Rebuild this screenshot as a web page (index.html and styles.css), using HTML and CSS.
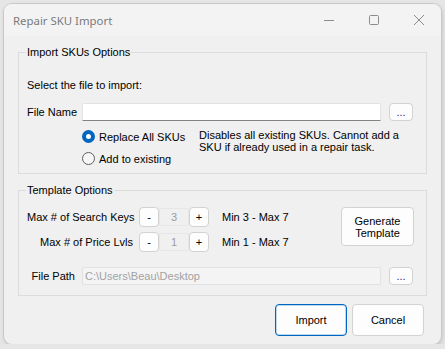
FILE: index.html
```html
<!DOCTYPE html>
<html lang="en">
<head>
  <meta charset="UTF-8">
  <meta name="viewport" content="width=device-width, initial-scale=1.0">
  <title>Repair SKU Import</title>
  <link rel="stylesheet" href="styles.css">
</head>
<body>
  <div class="window">
    <div class="titlebar">
      <span class="title">Repair SKU Import</span>
      <div class="controls">
        <span class="ctl">
          <svg width="12" height="12" viewBox="0 0 12 12"><path d="M1 6.5h10" stroke="#8c8c8c" stroke-width="1"/></svg>
        </span>
        <span class="ctl">
          <svg width="12" height="12" viewBox="0 0 12 12"><rect x="1.5" y="1.5" width="9" height="9" rx="1" fill="none" stroke="#8c8c8c" stroke-width="1"/></svg>
        </span>
        <span class="ctl">
          <svg width="12" height="12" viewBox="0 0 12 12"><path d="M1 1L11 11M11 1L1 11" stroke="#8c8c8c" stroke-width="1"/></svg>
        </span>
      </div>
    </div>

    <div class="client">
      <fieldset class="group import-group">
        <legend>Import SKUs Options</legend>
        <div class="prompt">Select the file to import:</div>
        <div class="file-row">
          <label class="file-label">File Name</label>
          <div class="textbox"></div>
          <button class="btn browse">...</button>
        </div>
        <div class="options">
          <div class="radios">
            <label class="radio-row"><span class="radio checked"></span>Replace All SKUs</label>
            <label class="radio-row"><span class="radio"></span>Add to existing</label>
          </div>
          <div class="note">Disables all existing SKUs. Cannot add a<br>SKU if already used in a repair task.</div>
        </div>
      </fieldset>

      <fieldset class="group template-group">
        <legend>Template Options</legend>
        <div class="template-top">
          <div class="spins">
            <div class="spin-row">
              <span class="spin-label">Max # of Search Keys</span>
              <button class="btn spin-btn">-</button>
              <span class="spin-value">3</span>
              <button class="btn spin-btn">+</button>
              <span class="range">Min 3 - Max 7</span>
            </div>
            <div class="spin-row">
              <span class="spin-label">Max # of Price Lvls</span>
              <button class="btn spin-btn">-</button>
              <span class="spin-value">1</span>
              <button class="btn spin-btn">+</button>
              <span class="range">Min 1 - Max 7</span>
            </div>
          </div>
          <button class="btn generate">Generate<br>Template</button>
        </div>
        <div class="file-row path-row">
          <label class="path-label">File Path</label>
          <div class="textbox disabled">C:\Users\Beau\Desktop</div>
          <button class="btn browse">...</button>
        </div>
      </fieldset>

      <div class="footer">
        <button class="btn action primary">Import</button>
        <button class="btn action">Cancel</button>
      </div>
    </div>
  </div>
</body>
</html>
```

FILE: styles.css
```css
/* General styles */
body {
  margin: 0;
  background: #e6e6e6;
  font-family: "Liberation Sans", Arial, sans-serif;
  font-size: 11px;
  color: #000000;
}

.window {
  margin: 4px 0 0 4px;
  width: 437px;
  height: 340px;
  background: #f0f0f0;
  border-radius: 8px;
  box-shadow: 0 0 0 1px #c9c9c9, 1px 2px 5px rgba(0, 0, 0, 0.18);
  overflow: hidden;
  display: flex;
  flex-direction: column;
}

/* Title bar */
.titlebar {
  height: 32px;
  flex: none;
  background: #f3f3f3;
  display: flex;
  align-items: center;
}

.title {
  padding-left: 9px;
  font-family: "Noto Sans", "Open Sans", sans-serif;
  font-size: 11.4px;
  color: #7b7b7b;
}

.controls {
  margin-left: auto;
  display: flex;
}

.ctl {
  width: 45px;
  height: 32px;
  display: flex;
  align-items: center;
  justify-content: center;
}

.ctl svg {
  display: block;
}

/* Client area */
.client {
  padding: 0 16px 0 14px;
  display: flex;
  flex-direction: column;
}

.group {
  margin: 10px 0 0 0;
  width: 409px;
  box-sizing: border-box;
  border: 1px solid #dcdcdc;
  padding: 0 12px 0 8px;
  min-width: 0;
}

.group legend {
  padding: 0 1px;
  margin-left: -1px;
  line-height: 13px;
}

.import-group {
  padding-bottom: 8px;
}

.prompt {
  margin-top: 20px;
  line-height: 13px;
}

.file-row {
  margin-top: 11px;
  height: 18px;
  display: flex;
  align-items: center;
}

.file-label {
  width: 55px;
  flex: none;
}

.textbox {
  width: 299px;
  height: 18px;
  box-sizing: border-box;
  background: #ffffff;
  border: 1px solid #e3e3e3;
  border-bottom-color: #838383;
  border-radius: 2px 2px 0 0;
  line-height: 16px;
  padding-left: 2px;
  white-space: nowrap;
}

.textbox.disabled {
  background: #f4f4f4;
  border-color: #e2e2e2;
  color: #a2a2a2;
}

.btn {
  font-family: "Liberation Sans", Arial, sans-serif;
  font-size: 11px;
  color: #000000;
  background: #fdfdfd;
  border: 1px solid #d2d2d2;
  border-radius: 4px;
  padding: 0;
  box-sizing: border-box;
}

.browse {
  margin-left: 8px;
  width: 24px;
  height: 18px;
  line-height: 12px;
  color: #3a1a8a;
}

.options {
  margin-top: 9px;
  padding-left: 55px;
  display: flex;
}

.radios {
  width: 117px;
  flex: none;
}

.radio-row {
  height: 13px;
  display: flex;
  align-items: center;
}

.radio-row + .radio-row {
  margin-top: 9px;
}

.radio {
  width: 13px;
  height: 13px;
  box-sizing: border-box;
  border: 1px solid #5f5f5f;
  border-radius: 50%;
  background: #f6f6f6;
  margin-right: 4px;
  flex: none;
}

.radio.checked {
  border: 4px solid #0067c0;
  background: #ffffff;
}

.note {
  line-height: 12px;
  margin-top: -1px;
}

/* Template options */
.template-group {
  padding-bottom: 10px;
}

.template-top {
  margin-top: 10px;
  display: flex;
}

.spin-row {
  height: 20px;
  display: flex;
  align-items: center;
}

.spin-row + .spin-row {
  margin-top: 5px;
}

.spin-label {
  width: 106px;
  margin-right: 6px;
  text-align: right;
  white-space: nowrap;
}

.spin-btn {
  width: 20px;
  height: 20px;
  line-height: 16px;
}

.spin-value {
  width: 30px;
  height: 18px;
  box-sizing: border-box;
  border: 1px solid #e6e6e6;
  border-radius: 2px;
  text-align: center;
  line-height: 16px;
  color: #9c9c9c;
}

.range {
  margin-left: 13px;
}

.generate {
  margin-left: auto;
  width: 73px;
  height: 39px;
  line-height: 12px;
}

.path-row {
  margin-top: 15px;
}

.path-label {
  width: 55px;
  padding-right: 7px;
  box-sizing: border-box;
  text-align: right;
  flex: none;
}

/* Footer buttons */
.footer {
  margin-top: 8px;
  display: flex;
  justify-content: flex-end;
  gap: 5px;
  padding-right: 1px;
}

.action {
  width: 72px;
  height: 32px;
}

.primary {
  border-color: #0067c0;
  box-shadow: inset 0 0 0 1px rgba(0, 103, 192, 0.25);
}
```
